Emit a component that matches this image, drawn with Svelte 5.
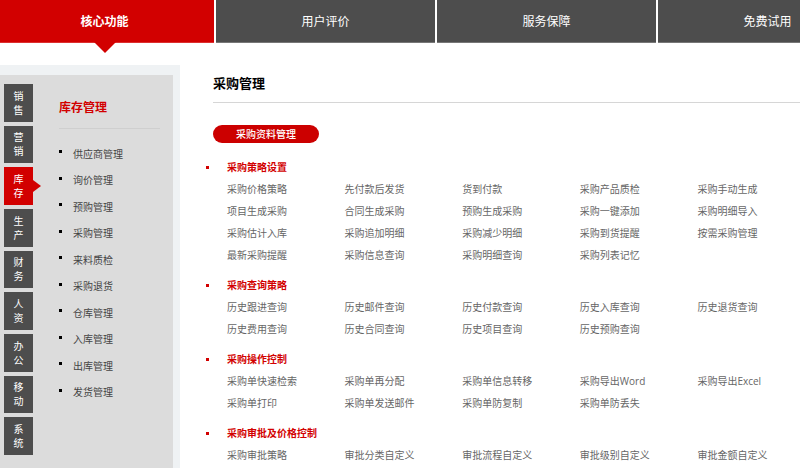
<script lang="ts">
	const menu = ['核心功能', '用户评价', '服务保障', '免费试用'];

	const modulos = ['销售', '营销', '库存', '生产', '财务', '人资', '办公', '移动', '系统'];

	const sections = [
		'供应商管理',
		'询价管理',
		'预购管理',
		'采购管理',
		'来料质检',
		'采购退货',
		'仓库管理',
		'入库管理',
		'出库管理',
		'发货管理'
	];

	const groups = [
		{
			title: '采购策略设置',
			items: [
				'采购价格策略', '先付款后发货', '货到付款', '采购产品质检', '采购手动生成',
				'项目生成采购', '合同生成采购', '预购生成采购', '采购一键添加', '采购明细导入',
				'采购估计入库', '采购追加明细', '采购减少明细', '采购到货提醒', '按需采购管理',
				'最新采购提醒', '采购信息查询', '采购明细查询', '采购列表记忆'
			]
		},
		{
			title: '采购查询策略',
			items: [
				'历史跟进查询', '历史邮件查询', '历史付款查询', '历史入库查询', '历史退货查询',
				'历史费用查询', '历史合同查询', '历史项目查询', '历史预购查询'
			]
		},
		{
			title: '采购操作控制',
			items: [
				'采购单快速检索', '采购单再分配', '采购单信息转移', '采购导出Word', '采购导出Excel',
				'采购单打印', '采购单发送邮件', '采购单防复制', '采购单防丢失'
			]
		},
		{
			title: '采购审批及价格控制',
			items: ['采购审批策略', '审批分类自定义', '审批流程自定义', '审批级别自定义', '审批金额自定义']
		}
	];

	let page = $state('核心功能');
	let current = $state('库存');
</script>

<div class="page">
	<nav class="top">
		{#each menu as m}
			<button class:active={page === m} onclick={() => (page = m)}>{m}</button>
		{/each}
	</nav>

	<div class="body">
		<aside>
			<div class="panel">
				<div class="tabs">
					{#each modulos as m}
						<button class:active={current === m} onclick={() => (current = m)}>
							<span>{m}</span>
						</button>
					{/each}
				</div>
				<div class="side">
					<h2>库存管理</h2>
					<ul>
						{#each sections as s}
							<li><a href="#top">{s}</a></li>
						{/each}
					</ul>
				</div>
			</div>
		</aside>

		<main>
			<h1>采购管理</h1>
			<p class="pill">采购资料管理</p>
			{#each groups as g}
				<section>
					<h3>{g.title}</h3>
					<ul class="items">
						{#each g.items as item}
							<li>{item}</li>
						{/each}
					</ul>
				</section>
			{/each}
		</main>
	</div>
</div>

<style>
	:global(body) {
		background: #fff;
	}
	.page {
		display: flex;
		flex-direction: column;
		min-height: 100vh;
		overflow-x: clip;
		font-family: 'Open Sans', 'Noto Sans CJK SC', sans-serif;
		font-size: 10px;
		color: #666;
	}
	h1,
	h2,
	h3,
	p,
	ul {
		margin: 0;
		padding: 0;
	}
	ul {
		list-style: none;
	}
	button {
		border: 0;
		padding: 0;
		font-family: inherit;
		color: #fff;
		background: #4d4d4d;
		position: relative;
		cursor: pointer;
	}
	button.active {
		background: #d20000;
	}
	button.active::after {
		content: '';
		position: absolute;
		border: 0 solid transparent;
	}

	/* the bar runs past both edges of the window */
	.top {
		display: grid;
		grid-template-columns: repeat(4, 1fr);
		gap: 2px;
		width: calc(110% + 2px);
		margin-left: -5px;
	}
	.top button {
		height: 43px;
		font-size: 12px;
		border-bottom: 1px solid #777;
	}
	.top button.active {
		font-weight: 700;
		border-bottom-color: #dc3030;
	}
	.top button.active::after {
		top: 42px;
		left: calc(50% - 11px);
		border-width: 11px 11px 0;
		border-top-color: #d20000;
	}

	.body {
		flex: 1;
		display: flex;
		padding-top: 22px;
	}
	aside {
		display: flex;
		flex: 0 0 180px;
		box-sizing: border-box;
		padding: 10px 7px 0 0;
		background: #eff2f4;
	}
	.panel {
		flex: 1;
		display: flex;
		align-items: flex-start;
		padding: 9px 13px 0 4px;
		background: #dcdcdc;
	}
	.tabs {
		flex: 0 0 29px;
		display: grid;
		grid-auto-rows: 1fr;
		gap: 4px;
		height: 371px;
	}
	.tabs button {
		font-size: 10px;
		line-height: 14px;
	}
	.tabs span {
		display: block;
		width: 10px;
		margin: 0 auto;
	}
	.tabs button.active::after {
		top: calc(50% - 6px);
		left: 100%;
		border-width: 6px 0 6px 8px;
		border-left-color: #d20000;
	}
	.side {
		flex: 1;
		padding: 11px 0 0 26px;
	}
	h2 {
		font-size: 12px;
		font-weight: 600;
		line-height: 26px;
		padding-bottom: 7px;
		border-bottom: 1px solid #cfcfcf;
		color: #d20000;
	}
	.side ul {
		display: grid;
		grid-auto-rows: 1fr;
		align-items: center;
		height: 265px;
		padding-top: 11px;
	}
	.side li {
		display: flex;
		align-items: center;
		gap: 11px;
	}
	.side li::before {
		content: '';
		width: 3px;
		height: 3px;
		margin-bottom: 3px;
		background: #000;
	}
	.side a {
		color: #444;
		text-decoration: none;
	}

	main {
		flex: 1;
		padding-left: 33px;
	}
	h1 {
		font-size: 13px;
		font-weight: 700;
		line-height: 37px;
		border-bottom: 1px solid #d6d6d6;
		color: #000;
	}
	.pill {
		width: fit-content;
		margin: 22px 0 13px;
		padding: 0 23px;
		border-radius: 9px;
		line-height: 18px;
		font-weight: 500;
		background: #cc0000;
		color: #fff;
	}
	section {
		margin-bottom: 8px;
		line-height: 22px;
	}
	section:last-child {
		margin-bottom: 0;
	}
	h3 {
		display: flex;
		align-items: center;
		gap: 18px;
		margin-left: -7px;
		font-size: 10px;
		font-weight: 700;
		color: #d20000;
	}
	h3::before {
		content: '';
		width: 3px;
		height: 3px;
		background: #d20000;
	}
	.items {
		display: grid;
		grid-template-columns: repeat(5, 1fr);
		margin: 0 -15px 0 14px;
	}
</style>
